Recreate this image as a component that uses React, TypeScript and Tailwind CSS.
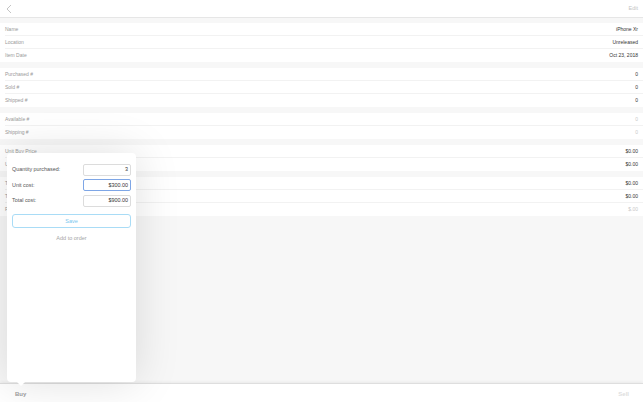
import React from 'react';

type Row = { label: string; value: string; faint?: boolean };

const sections: Row[][] = [
  [
    { label: 'Name', value: 'iPhone Xr' },
    { label: 'Location', value: 'Unreleased' },
    { label: 'Item Date', value: 'Oct 23, 2018' },
  ],
  [
    { label: 'Purchased #', value: '0' },
    { label: 'Sold #', value: '0' },
    { label: 'Shipped #', value: '0' },
  ],
  [
    { label: 'Available #', value: '0', faint: true },
    { label: 'Shipping #', value: '0', faint: true },
  ],
  [
    { label: 'Unit Buy Price', value: '$0.00' },
    { label: 'Unit Sell Price', value: '$0.00' },
  ],
  [
    { label: 'Total Buy Price', value: '$0.00' },
    { label: 'Total Sell Price', value: '$0.00' },
    { label: 'Profit', value: '$.00', faint: true },
  ],
];

function Field({ label, value, focused }: { label: string; value: string; focused?: boolean }) {
  return (
    <div className="flex items-center justify-between h-[13px]">
      <span className="text-[5.4px] text-[#555]">{label}</span>
      <div
        className={`w-[48px] h-[12px] flex items-center justify-end pr-[2px] rounded-[2px] text-[5.4px] text-[#333] ${
          focused ? 'border-[1.5px] border-[#7ea6e6]' : 'border border-[#dcdcdc]'
        }`}
      >
        {value}
      </div>
    </div>
  );
}

export default function App() {
  return (
    <div
      className="relative w-[643px] h-[402px] bg-[#f7f7f7] overflow-hidden flex flex-col"
      style={{ fontFamily: '"Liberation Sans", Arial, sans-serif' }}
    >
      {/* Top bar */}
      <div className="h-[18px] bg-white border-b border-[#e6e6e6] flex items-center justify-between px-[5px] shrink-0">
        <svg width="6" height="10" viewBox="0 0 6 10" className="ml-[1px]">
          <path d="M5 1 L1 5 L5 9" fill="none" stroke="#b5b5b5" strokeWidth="0.8" />
        </svg>
        <span className="text-[5.5px] text-[#c4c4c4]">Edit</span>
      </div>

      {/* Detail list */}
      <div className="flex flex-col gap-[6px] pt-[5px]">
        {sections.map((rows, i) => (
          <div key={i} className="bg-white">
            {rows.map((r, j) => (
              <div key={j} className="h-[13px] flex items-center justify-between pl-[5px] pr-[5px] relative">
                <span className="text-[5px] text-[#9a9a9a]">{r.label}</span>
                <span className={`text-[5px] ${r.faint ? 'text-[#c8c8c8]' : 'text-[#333]'}`}>{r.value}</span>
                {j < rows.length - 1 && (
                  <div className="absolute left-[5px] right-0 bottom-0 h-px bg-[#f2f2f2]" />
                )}
              </div>
            ))}
          </div>
        ))}
      </div>

      <div className="flex-1" />

      {/* Bottom bar */}
      <div className="h-[19px] bg-white border-t border-[#dedede] shadow-[0_-1px_3px_rgba(0,0,0,0.06)] flex items-center justify-between px-[15px] shrink-0">
        <span className="text-[6px] font-semibold text-[#a0a0a0] pt-[2px]">Buy</span>
        <span className="text-[6px] font-semibold text-[#dedede] pt-[2px] mr-[-1px]">Sell</span>
      </div>

      {/* Popover */}
      <div className="absolute left-[7px] top-[153px] w-[129px] h-[229px] bg-white rounded-[4px] shadow-[0_0_45px_rgba(0,0,0,0.13)] px-[5px] pt-[10px] flex flex-col">
        <div className="flex flex-col gap-[2.5px]">
          <Field label="Quantity purchased:" value="3" />
          <Field label="Unit cost:" value="$300.00" focused />
          <Field label="Total cost:" value="$900.00" />
        </div>
        <div className="mt-[7px] h-[14px] rounded-[3px] border border-[#a9dcf6] flex items-center justify-center text-[5.5px] text-[#79c6ee]">
          Save
        </div>
        <div className="mt-[6px] text-center text-[5.5px] text-[#a5a5a5]">Add to order</div>
        <div className="absolute left-[10px] bottom-[-4px] w-0 h-0 border-l-[4px] border-r-[4px] border-t-[4px] border-l-transparent border-r-transparent border-t-white" />
      </div>
    </div>
  );
}
